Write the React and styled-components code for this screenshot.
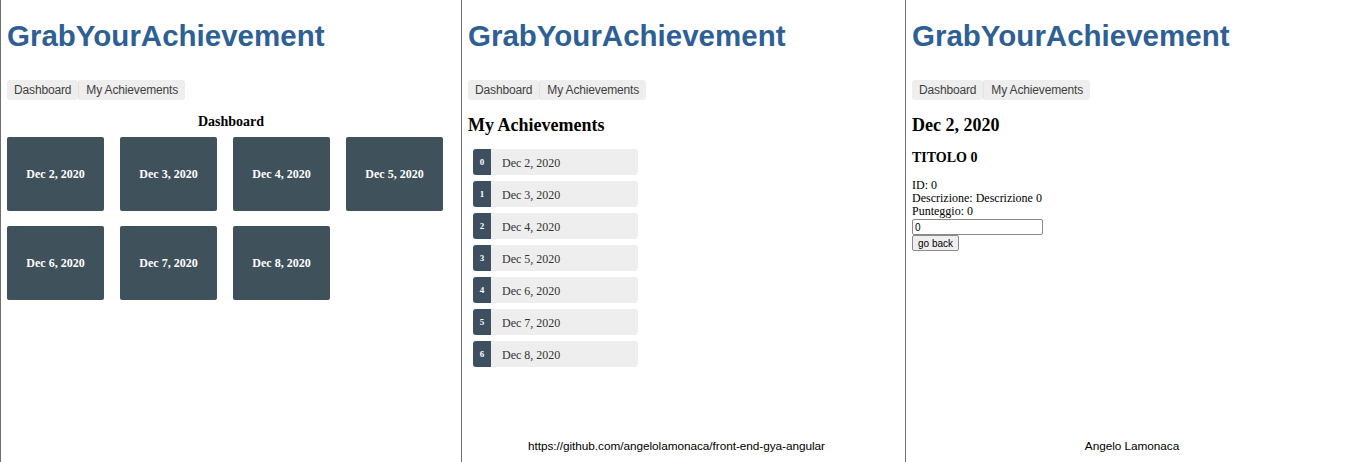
import React from 'react';
import styled, { createGlobalStyle } from 'styled-components';

const GlobalStyle = createGlobalStyle`
  html, body {
    margin: 0;
    padding: 0;
    background: #fff;
  }
  body {
    font-family: "Liberation Serif", "Times New Roman", serif;
    font-size: 12px;
    color: #000;
  }
`;

const Page = styled.div`
  display: flex;
  width: 1354px;
  height: 462px;
  overflow: hidden;
`;

const Panel = styled.section`
  width: ${props => props.width}px;
  flex-shrink: 0;
  box-sizing: border-box;
  border-left: 1px solid #6f6f6f;
  padding: 0 6px;
  display: flex;
  flex-direction: column;
`;

const Title = styled.h1`
  margin: 19px 0 0;
  font-family: "Liberation Sans", Arial, sans-serif;
  font-size: 29.5px;
  line-height: 34px;
  font-weight: bold;
  color: #2e5f95;
  white-space: nowrap;
`;

const Nav = styled.nav`
  display: flex;
  margin-top: 27px;
`;

const NavLink = styled.a`
  display: block;
  padding: 3px 7px;
  font-family: "Liberation Sans", Arial, sans-serif;
  font-size: 12px;
  line-height: 14px;
  letter-spacing: -0.15px;
  color: #3f3f3f;
  background: #eee;
  border-radius: 3px;
  text-decoration: none;
  & + & {
    border-left: 1px solid #e2e2e2;
  }
`;

const SectionHeading = styled.h3`
  margin: 14px 0 7px;
  font-size: 14px;
  line-height: 16px;
  font-weight: bold;
  text-align: ${props => (props.center ? 'center' : 'left')};
`;

const PageHeading = styled.h2`
  margin: 15px 0 13px;
  font-size: 18px;
  line-height: 21px;
  font-weight: bold;
`;

const TileGrid = styled.div`
  display: grid;
  grid-template-columns: repeat(4, 97px);
  column-gap: 16px;
  row-gap: 15px;
`;

const Tile = styled.div`
  height: 74px;
  background: #3f515b;
  border-radius: 2px;
  display: flex;
  align-items: center;
  justify-content: center;
  color: #fff;
  font-weight: bold;
  font-size: 12px;
`;

const List = styled.ul`
  list-style: none;
  margin: 0;
  padding: 0 0 0 5px;
  display: flex;
  flex-direction: column;
  gap: 6px;
`;

const ListItem = styled.li`
  width: 165px;
  height: 26px;
  display: flex;
  align-items: center;
  background: #eee;
  border-radius: 3px;
  color: #333;
  font-size: 12px;
`;

const ItemLabel = styled.span`
  padding-top: 2px;
`;

const Badge = styled.span`
  width: 18px;
  height: 100%;
  flex-shrink: 0;
  display: flex;
  align-items: center;
  justify-content: center;
  background: #3e4f60;
  border-radius: 3px 0 0 3px;
  color: #fff;
  font-size: 9px;
  font-weight: bold;
  margin-right: 11px;
`;

const DetailHeading = styled.h3`
  margin: 1px 0 13px;
  font-size: 14px;
  line-height: 16px;
  font-weight: bold;
`;

const DetailLine = styled.div`
  font-size: 12px;
  line-height: 13px;
`;

const Field = styled.input`
  display: block;
  box-sizing: border-box;
  width: 131px;
  height: 16px;
  margin: 1px 0 0;
  padding: 0 2px;
  border: 1px solid #8a8a8a;
  border-radius: 2px;
  font-family: "Liberation Sans", Arial, sans-serif;
  font-size: 10px;
  color: #000;
`;

const BackButton = styled.button`
  display: block;
  align-self: flex-start;
  box-sizing: border-box;
  height: 16px;
  margin: 0;
  padding: 0 5px;
  border: 1px solid #8a8a8a;
  border-radius: 2px;
  background: #efefef;
  font-family: "Liberation Sans", Arial, sans-serif;
  font-size: 10px;
  line-height: 13px;
  color: #000;
`;

// offset > 0 nudges the centred text right, < 0 nudges it left
const Footer = styled.footer`
  margin-top: auto;
  margin-bottom: 9px;
  padding-left: ${props => Math.max(props.offset || 0, 0)}px;
  padding-right: ${props => Math.max(-(props.offset || 0), 0)}px;
  text-align: center;
  font-family: "Liberation Sans", Arial, sans-serif;
  font-size: 11.8px;
  line-height: 13px;
  letter-spacing: -0.05px;
  color: #000;
`;

const dates = ['Dec 2, 2020', 'Dec 3, 2020', 'Dec 4, 2020', 'Dec 5, 2020', 'Dec 6, 2020', 'Dec 7, 2020', 'Dec 8, 2020'];

const Header = () => (
  <>
    <Title>GrabYourAchievement</Title>
    <Nav>
      <NavLink>Dashboard</NavLink>
      <NavLink>My Achievements</NavLink>
    </Nav>
  </>
);

const App = () => (
  <>
    <GlobalStyle />
    <Page>
      <Panel width={461}>
        <Header />
        <SectionHeading center>Dashboard</SectionHeading>
        <TileGrid>
          {dates.map(d => (
            <Tile key={d}>{d}</Tile>
          ))}
        </TileGrid>
      </Panel>
      <Panel width={444}>
        <Header />
        <PageHeading>My Achievements</PageHeading>
        <List>
          {dates.map((d, i) => (
            <ListItem key={d}>
              <Badge>{i}</Badge>
              <ItemLabel>{d}</ItemLabel>
            </ListItem>
          ))}
        </List>
        <Footer offset={-14}>https://github.com/angelolamonaca/front-end-gya-angular</Footer>
      </Panel>
      <Panel width={449}>
        <Header />
        <PageHeading>Dec 2, 2020</PageHeading>
        <DetailHeading>TITOLO 0</DetailHeading>
        <DetailLine>ID: 0</DetailLine>
        <DetailLine>Descrizione: Descrizione 0</DetailLine>
        <DetailLine>Punteggio: 0</DetailLine>
        <Field defaultValue="0" />
        <BackButton>go back</BackButton>
        <Footer offset={4}>Angelo Lamonaca</Footer>
      </Panel>
    </Page>
  </>
);

export default App;
